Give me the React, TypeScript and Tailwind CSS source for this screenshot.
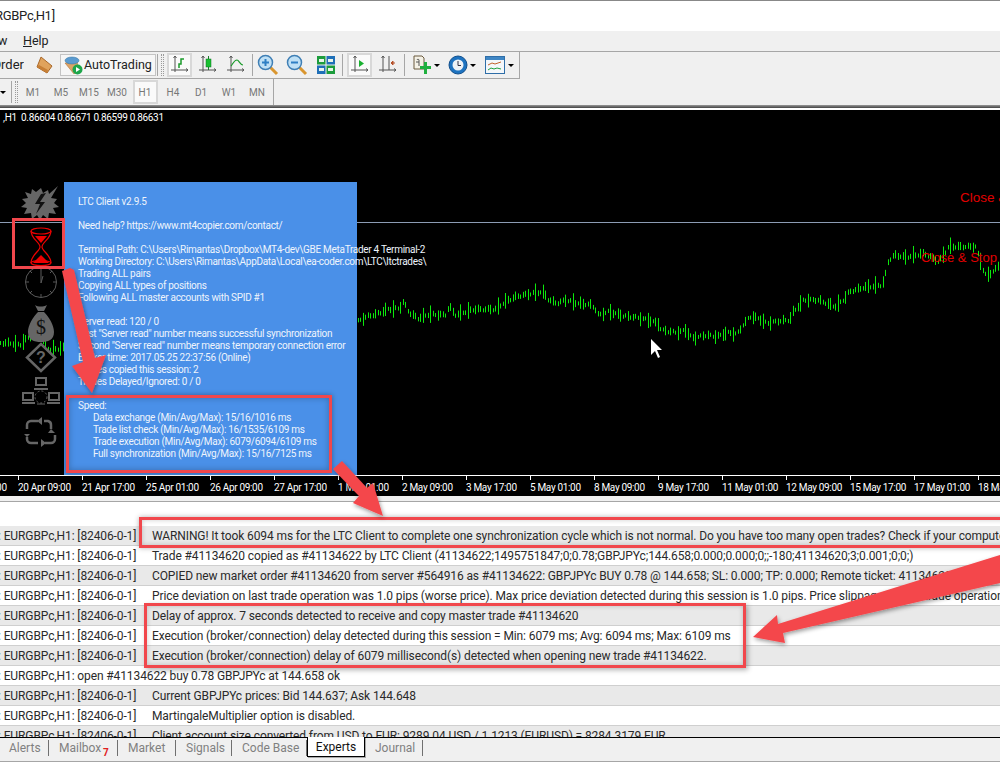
const traceRaw: [number, number][] = [
  [18, 425], [40, 410], [70, 400], [90, 388], [120, 385], [128, 365], [145, 400], [165, 415], [190, 403], [230, 405],
  [240, 380], [255, 405], [280, 395], [300, 388], [350, 388], [375, 365], [400, 350], [440, 340], [465, 335], [480, 360],
  [500, 370], [520, 360], [550, 370], [585, 375], [600, 405], [625, 395], [660, 408], [690, 412], [720, 420], [745, 432],
  [750, 450], [790, 458], [810, 450], [825, 475], [860, 465], [885, 470], [910, 458], [935, 462], [945, 440], [965, 410],
  [985, 415], [1005, 430], [1040, 422], [1060, 420], [1070, 395], [1095, 360], [1130, 360], [1170, 380], [1190, 360], [1205, 335],
  [1240, 322], [1285, 315], [1300, 240], [1315, 225], [1340, 232], [1385, 220], [1420, 245], [1445, 200], [1510, 200], [1525, 260],
  [1535, 290], [1555, 270], [1568, 255],
]

// chart line in page coords, y relative to chart top (110)
const trace: [number, number][] = [
  [0, 233], [10, 233], [20, 235], [25, 230], [33, 225], [40, 227], [50, 240], [63, 238],
  ...traceRaw.map(([x, y]): [number, number] => [350 + x / 2.412, 70 + y / 3]),
]

function priceAt(x: number) {
  for (let i = 1; i < trace.length; i++) {
    if (x <= trace[i][0]) {
      const [x0, y0] = trace[i - 1]
      const [x1, y1] = trace[i]
      return y0 + ((y1 - y0) * (x - x0)) / (x1 - x0 || 1)
    }
  }
  return trace[trace.length - 1][1]
}

const bars = Array.from({ length: 400 }, (_, i) => {
  const x = Math.round(i * 2.5) + 0.5
  const y = priceAt(x) + Math.sin(i * 1.7) * 1
  const wave = Math.abs(Math.sin(i * 0.83) * Math.cos(i * 2.1))
  const h = 2 + wave * wave * 7
  return { x, y1: y - h, y2: y + h }
})

const logRows = [
  'WARNING! It took 6094 ms for the LTC Client to complete one synchronization cycle which is not normal. Do you have too many open trades? Check if your computer',
  'Trade #41134620 copied as #41134622 by LTC Client (41134622;1495751847;0;0.78;GBPJPYc;144.658;0.000;0.000;0;;-180;41134620;3;0.001;0;0;)',
  'COPIED new market order #41134620 from server #564916 as #41134622: GBPJPYc BUY 0.78 @ 144.658; SL: 0.000; TP: 0.000; Remote ticket: 41134620;',
  'Price deviation on last trade operation was 1.0 pips (worse price). Max price deviation detected during this session is 1.0 pips. Price slippage on last trade operation',
  'Delay of approx. 7 seconds detected to receive and copy master trade #41134620',
  'Execution (broker/connection) delay detected during this session = Min: 6079 ms; Avg: 6094 ms; Max: 6109 ms',
  'Execution (broker/connection) delay of 6079 millisecond(s) detected when opening new trade #41134622.',
  null,
  'Current GBPJPYc prices: Bid 144.637; Ask 144.648',
  'MartingaleMultiplier option is disabled.',
  'Client account size converted from USD to EUR: 9289.04 USD / 1.1213 (EURUSD) = 8284.3179 EUR',
]

const axisLabels = [
  '17 Apr 17:00', '20 Apr 09:00', '21 Apr 17:00', '25 Apr 01:00', '26 Apr 09:00', '27 Apr 17:00', '1 May 01:00', '2 May 09:00', '3 May 17:00',
  '5 May 01:00', '8 May 09:00', '9 May 17:00', '11 May 01:00', '12 May 09:00', '15 May 17:00', '17 May 01:00', '18 May 09:00',
]

const timeframes = ['M1', 'M5', 'M15', 'M30', 'H1', 'H4', 'D1', 'W1', 'MN']

function Axes({ children }: { children?: React.ReactNode }) {
  return (
    <svg width="20" height="20" viewBox="0 0 20 20" fill="none">
      <path d="M5 1v16M1 15h17M3.500 3 5 1l1.500 2M16 13.500l2 1.500-2 1.500" stroke="#555" strokeWidth="1" />
      {children}
    </svg>
  )
}

function Lens({ minus }: { minus?: boolean }) {
  return (
    <svg width="22" height="22" viewBox="0 0 22 22" fill="none">
      <path d="M13 13l7 7" stroke="#d9962f" strokeWidth="3" />
      <circle cx="8.500" cy="8.500" r="7" fill="#bfe0f5" stroke="#3f7fb5" strokeWidth="1.500" />
      <path d={minus ? 'M5 8.500h7' : 'M5 8.500h7M8.500 5v7'} stroke="#2e7fc4" strokeWidth="2" />
    </svg>
  )
}

function Caret() {
  return <div className="w-0 h-0 border-x-[3px] border-x-transparent border-t-[3px] border-t-black" />
}

function Sep() {
  return <div className="w-px h-[22px] bg-[#a6a6a6]" />
}

function Grip() {
  return <div className="w-[3px] h-[22px] border-x border-dotted border-[#9a9a9a]" />
}

function Btn({ className, active, children }: { className: string; active?: boolean; children: React.ReactNode }) {
  return (
    <div className={`${className} h-[24px] flex items-center justify-center ${active ? 'bg-[#fafafa] border-2 border-[#d8d8d8]' : ''}`}>
      {children}
    </div>
  )
}

function Toolbar() {
  return (
    <div className="w-[520px] h-[27px] flex items-center border-b border-r border-[#a6a6a6] text-[#222]">
      <div className="w-[24px] overflow-hidden flex justify-end text-[13px] whitespace-nowrap">Order</div>
      <div className="ml-[12px] w-[17px] flex">
        <svg width="17" height="18" viewBox="0 0 17 18">
          <path d="M5 1l11 9-5 7-10-6z" fill="#e0a35c" stroke="#a8672a" />
          <path d="M1 11l10 6 1-3-9-5z" fill="#c77f35" />
        </svg>
      </div>
      <div className="ml-[7px] w-[96px] h-[22px] flex items-center border border-[#c4c4c4] bg-[#f6f6f6]">
        <svg className="ml-[2px] shrink-0" width="20" height="20" viewBox="0 0 20 20">
          <path d="M2 8l12-1 2 7-5 5z" fill="#dca468" stroke="#a8672a" strokeWidth="0.500" />
          <ellipse cx="9" cy="5.500" rx="7" ry="3.500" fill="#5b9bd0" stroke="#33729f" strokeWidth="0.500" />
          <circle cx="14.500" cy="14.500" r="5" fill="#1ea64b" />
          <path d="M13 12v5l4-2.500z" fill="#fff" />
        </svg>
        <span className="ml-[1px] text-[12.500px] whitespace-nowrap">AutoTrading</span>
      </div>
      <div className="ml-px"><Sep /></div>
      <div className="ml-[3px]"><Grip /></div>
      <Btn className="ml-[3px] w-[25px]" active>
        <Axes><path d="M9 13V9h2V4h3" stroke="#1a9a2a" strokeWidth="1.500" /></Axes>
      </Btn>
      <Btn className="w-[32px]">
        <Axes>
          <path d="M10.500 1v14" stroke="#1a7a2a" />
          <rect x="8" y="4" width="5" height="8" fill="#18c02f" stroke="#12702a" strokeWidth="0.500" />
        </Axes>
      </Btn>
      <Btn className="w-[24px]">
        <Axes><path d="M5 11c2-2 3-6 6-6 2 0 3 5 6 5" stroke="#1a9a2a" strokeWidth="1.200" /></Axes>
      </Btn>
      <div className="ml-[4px]"><Sep /></div>
      <Btn className="w-[30px]"><Lens /></Btn>
      <Btn className="w-[28px]"><Lens minus /></Btn>
      <Btn className="w-[30px]">
        <svg width="18" height="18" viewBox="0 0 18 18">
          <rect x="0" y="0" width="8.500" height="8.500" fill="#1c9c3c" />
          <rect x="9.500" y="0" width="8.500" height="8.500" fill="#1f6fb8" />
          <rect x="0" y="9.500" width="8.500" height="8.500" fill="#1f6fb8" />
          <rect x="9.500" y="9.500" width="8.500" height="8.500" fill="#1c9c3c" />
          <path d="M2 3h5v3H2zM11 3h5v3h-5zM2 12h5v3H2zM11 12h5v3h-5z" fill="#e8f4ea" />
        </svg>
      </Btn>
      <div className="ml-px"><Sep /></div>
      <Btn className="ml-[4px] w-[25px]" active>
        <Axes><path d="M9 5v7l5-3.500z" fill="#18b02f" /></Axes>
      </Btn>
      <Btn className="w-[32px]">
        <Axes>
          <path d="M11 1v14" stroke="#555" />
          <path d="M17 8h-4M13 8l2-2v4z" fill="#b5502a" stroke="#b5502a" />
        </Axes>
      </Btn>
      <Sep />
      <Btn className="ml-[2px] w-[30px]">
        <svg width="20" height="20" viewBox="0 0 20 20">
          <path d="M2 1h8l2 2v11H2z" fill="#f4f1e6" stroke="#6b5a3e" />
          <path d="M5 5c0-1 2-1 2 0v6M4 7h3" stroke="#555" fill="none" />
          <path d="M12 7h3v4h4v3h-4v5h-3v-5H8v-3h4z" fill="#1fb03f" />
        </svg>
      </Btn>
      <div className="w-[6px] -ml-[3px] flex justify-center"><Caret /></div>
      <Btn className="ml-[6px] w-[24px]">
        <svg width="20" height="20" viewBox="0 0 20 20">
          <circle cx="10" cy="10" r="9" fill="#1e73c0" stroke="#124f8c" />
          <circle cx="10" cy="10" r="5.500" fill="#eef3f7" />
          <path d="M10 6v4.500h3" stroke="#334" fill="none" />
        </svg>
      </Btn>
      <div className="w-[6px] flex justify-center"><Caret /></div>
      <Btn className="ml-[6px] w-[26px]">
        <svg width="20" height="18" viewBox="0 0 20 18">
          <rect x="0.500" y="0.500" width="19" height="17" fill="#f4f7fa" stroke="#2f6ea8" />
          <rect x="1" y="1" width="18" height="3" fill="#3f86c4" />
          <path d="M3 9l4-2 3 1 6-2" stroke="#c2622a" fill="none" />
          <path d="M3 14l3-2 3 1 3-1 4 1" stroke="#1fa03f" fill="none" />
        </svg>
      </Btn>
      <div className="w-[6px] flex justify-center"><Caret /></div>
    </div>
  )
}

function Timeframes() {
  return (
    <div className="w-[274px] h-[26px] flex items-center border-r border-[#a6a6a6]">
      <div className="w-[6px] flex justify-center"><Caret /></div>
      <div className="ml-[5px]"><Sep /></div>
      <div className="ml-[3px]"><Grip /></div>
      <div className="ml-px flex text-[10px] text-[#777]">
        {timeframes.map(tf => (
          <div key={tf} className="w-[28px] flex justify-center">
            <span className={`h-[24px] flex items-center justify-center ${tf === 'H1' ? 'w-[25px] bg-[#fafafa] border-2 border-[#d8d8d8]' : ''}`}>{tf}</span>
          </div>
        ))}
      </div>
    </div>
  )
}

function ChartIcons() {
  return (
    <div className="absolute left-[20px] top-[75px] w-[42px] flex flex-col items-center">
      <svg width="42" height="36" viewBox="0 0 42 36">
        <path d="M21 3l2 5 5-3 1 4 9-8-7 12 6 1-3 4 5 4-6 1 3 6-7-1-1 6-5-4-3 5-3-5-5 4-1-6-7 1 3-6-6-1 5-4-4-4 6-1-3-6 6 2 1-5 4 3z" fill="#666" />
        <path d="M26 8l-6 9h5l-9 12 4-10h-5l6-10z" fill="#111" />
      </svg>
      <svg className="mt-[6px]" width="26" height="40" viewBox="0 0 26 40" fill="none" stroke="#f00000" strokeWidth="1.200">
        <ellipse cx="13" cy="4" rx="10" ry="3" />
        <path d="M3 4c0 8 9 11 9 16 0 4-9 8-9 16M23 4c0 8-9 11-9 16 0 4 9 8 9 16" />
        <ellipse cx="13" cy="36" rx="10" ry="2.500" />
        <path d="M7 9h12l-6 7zM5 36l8-8 8 8z" fill="#f00000" stroke="none" />
      </svg>
      <svg className="mt-[-2px]" width="34" height="34" viewBox="0 0 34 34" fill="none" stroke="#5a5a5a">
        <circle cx="17" cy="17" r="15.500" />
        <path d="M17 5v13l2-7M17 2v3M17 29v3M2 17h3M29 17h3M6 6l2 2M28 6l-2 2M6 28l2-2M28 28l-2-2" />
      </svg>
      <svg className="mt-[5px]" width="26" height="38" viewBox="0 0 26 38">
        <path d="M7 1c3 2 8 2 12 0l-3 6h-6zM10 8h6c5 5 10 13 10 20 0 8-6 10-13 10S0 36 0 28C0 21 5 13 10 8z" fill="#666" />
        <text x="13" y="30" textAnchor="middle" fontSize="20" fontFamily="Liberation Serif, serif" fill="#111">$</text>
      </svg>
      <svg className="mt-[0px]" width="32" height="31" viewBox="0 0 32 31" fill="none">
        <path d="M16 2l14 13.500L16 29 2 15.500z" stroke="#666" strokeWidth="2.500" />
        <text x="16" y="21" textAnchor="middle" fontSize="16" fontWeight="bold" fontFamily="Liberation Sans, sans-serif" fill="#666">?</text>
      </svg>
      <svg className="mt-[4px]" width="38" height="33" viewBox="0 0 38 33">
        <path d="M13 0h12v9H13zM15 2v5h8V2zM0 15h12v9H0zM2 17v5h8v-5zM26 15h12v9H26zM28 17v5h8v-5z" fill="#666" fillRule="evenodd" />
        <path d="M12 11h14v2H12zM-1 25h14v2H-1zM25 25h14v2H25z" fill="#666" />
        <circle cx="19" cy="20" r="6" fill="none" stroke="#666" strokeDasharray="2 2" />
        <path d="M15 27h8" stroke="#666" />
      </svg>
      <svg className="mt-[6px]" width="34" height="32" viewBox="0 0 34 32" fill="none" stroke="#666" strokeWidth="2.500">
        <path d="M14 5H7a4 4 0 0 0-4 4v4M27 13V9a4 4 0 0 0-3-4h-4M31 19v4a4 4 0 0 1-4 4h-6M14 27H7a4 4 0 0 1-4-4v-2" />
        <path d="M18 1l-5 4 5 4zM3 21l-3-3h6zM27 13l-3 4h7zM17 23l5 4-5 4z" fill="#666" stroke="none" />
      </svg>
    </div>
  )
}

function InfoPanel() {
  return (
    <div className="absolute left-[64px] top-[72px] w-[293px] h-[293px] bg-[#4a90e8] pt-[14px] pl-[14px] text-[10px] tracking-[-0.3px] leading-[12px] text-[#eef4fc] whitespace-pre">
      <div>LTC Client v2.9.5</div>
      <div className="mt-[12px]">Need help? https://www.mt4copier.com/contact/</div>
      <div className="mt-[12px]">Terminal Path: C:\Users\Rimantas\Dropbox\MT4-dev\GBE MetaTrader 4 Terminal-2</div>
      <div>Working Directory: C:\Users\Rimantas\AppData\Local\ea-coder.com\LTC\ltctrades\</div>
      <div>Trading ALL pairs</div>
      <div>Copying ALL types of positions</div>
      <div>Following ALL master accounts with SPID #1</div>
      <div className="mt-[12px]">Server read: 120 / 0</div>
      <div>First "Server read" number means successful synchronization</div>
      <div>Second "Server read" number means temporary connection error</div>
      <div>Broker time: 2017.05.25 22:37:56 (Online)</div>
      <div>Trades copied this session: 2</div>
      <div>Trades Delayed/Ignored: 0 / 0</div>
      <div className="mt-[12px]">Speed:</div>
      <div className="pl-[15px]">
        <div>Data exchange (Min/Avg/Max): 15/16/1016 ms</div>
        <div>Trade list check (Min/Avg/Max): 16/1535/6109 ms</div>
        <div>Trade execution (Min/Avg/Max): 6079/6094/6109 ms</div>
        <div>Full synchronization (Min/Avg/Max): 15/16/7125 ms</div>
      </div>
    </div>
  )
}

function Chart() {
  return (
    <div className="h-[386px] flex flex-col bg-black text-white">
      <div className="relative flex-1 overflow-hidden">
        <svg className="absolute inset-0" width="1000" height="365" viewBox="0 0 1000 365">
          <path d="M0 112.500h1000" stroke="#8c9cb4" />
          {bars.map(b => (
            <line key={b.x} x1={b.x} x2={b.x} y1={b.y1} y2={b.y2} stroke="#0ce80c" />
          ))}
          <path d="M651 229v16l4-4 3 7 2-1-3-7 5 0z" fill="#fff" />
        </svg>
        <div className="absolute left-[3px] top-[1px] text-[10px] tracking-[-0.33px] leading-[14px] whitespace-pre">,H1  0.86604 0.86671 0.86599 0.86631</div>
        <ChartIcons />
        <div className="absolute left-[960px] top-[80px] text-[13.500px] leading-[16px] text-[#e00000] whitespace-nowrap font-['Liberation_Sans',sans-serif]">Close &amp; Stop</div>
        <div className="absolute left-[921px] top-[140px] text-[13px] leading-[16px] text-[#e00000] whitespace-nowrap font-['Liberation_Sans',sans-serif]">Close &amp; Stop</div>
        <InfoPanel />
      </div>
      <div className="h-[21px] border-t border-white flex -ml-[46px] shrink-0">
        {axisLabels.map(l => (
          <div key={l} className="w-[64px] shrink-0">
            <div className="w-px h-[4px] bg-white" />
            <div className="text-[10px] tracking-[-0.33px] leading-[14px] whitespace-nowrap mt-[1px]">{l}</div>
          </div>
        ))}
      </div>
    </div>
  )
}

function LogRow({ message, odd }: { message: string | null; odd: boolean }) {
  return (
    <div className={`h-[20px] shrink-0 flex items-center border-b border-[#cfcfcf] text-[12px] tracking-[-0.11px] text-[#2a2a2a] whitespace-nowrap ${odd ? 'bg-white' : 'bg-[#e9e9e9]'}`}>
      {message === null ? (
        <span className="-ml-[2px]">: EURGBPc,H1: open #41134622 buy 0.78 GBPJPYc at 144.658 ok</span>
      ) : (
        <>
          <span className="-ml-[2px] w-[154px] shrink-0">: EURGBPc,H1: [82406-0-1]</span>
          <span>{message}</span>
        </>
      )}
    </div>
  )
}

function Tabs() {
  const items = [
    { label: 'Alerts', w: 'w-[49px]' },
    { label: 'Mailbox', w: 'w-[69px]', badge: '7' },
    { label: 'Market', w: 'w-[58px]' },
    { label: 'Signals', w: 'w-[56px]' },
    { label: 'Code Base', w: 'w-[75px]' },
  ]
  return (
    <div className="h-[24px] shrink-0 flex items-start bg-[#f0f0f0] border-t border-black text-[12px] text-[#808080]">
      {items.map((t, i) => (
        <div key={t.label} className={`${t.w} h-[16px] mt-[2px] flex items-center ${i === 0 ? 'pl-[9px]' : 'pl-[10px]'} border-r border-[#707070] whitespace-nowrap relative`}>
          {t.label}
          {t.badge && <span className="absolute left-[54px] top-[5px] text-[10px] font-bold text-[#e02020]">{t.badge}</span>}
        </div>
      ))}
      <div className="w-[58px] h-[20px] -mt-px bg-white border-x border-b border-black text-[#111] flex items-center justify-center shadow-[1px_1px_0_#aaa]">Experts</div>
      <div className="ml-[10px] w-[48px] h-[16px] mt-[2px] flex items-center border-r border-[#707070]">Journal</div>
    </div>
  )
}

function Annotations() {
  return (
    <>
      <div className="absolute left-[12px] top-[218px] w-[53px] h-[51px] border-[3px] border-[#f1474c]" />
      <div className="absolute left-[66px] top-[395px] w-[266px] h-[78px] border-[3px] border-[#f1474c] shadow-[0_0_5px_rgba(0,0,0,0.35),inset_0_0_6px_rgba(0,0,0,0.25)]" />
      <div className="absolute left-[139px] top-[517px] w-[880px] h-[31px] border-[3px] border-[#f1474c] shadow-[0_0_5px_rgba(0,0,0,0.3),inset_0_0_5px_rgba(0,0,0,0.2)]" />
      <div className="absolute left-[144px] top-[603px] w-[602px] h-[65px] border-[3px] border-[#f1474c] shadow-[2px_2px_5px_rgba(0,0,0,0.3),inset_0_0_5px_rgba(0,0,0,0.2)]" />
      <svg className="absolute inset-0 pointer-events-none" width="1000" height="764" viewBox="0 0 1000 764">
        <defs>
          <filter id="arrowShadow" x="-20%" y="-20%" width="140%" height="140%">
            <feDropShadow dx="1" dy="2" stdDeviation="2" floodColor="#000" floodOpacity="0.4" />
          </filter>
        </defs>
        <g fill="#f4474b" filter="url(#arrowShadow)">
          <path d="M62 271L70 268L74 270L95 358L106 355L92 393L72 366L83 362Z" />
          <path d="M333 469L342 461L367 488L373 483L383 516L353 503L359 496Z" />
          <path d="M1000 555V583L783 633L785 643L753 637L777 615L778 624Z" />
        </g>
      </svg>
    </>
  )
}

export default function App() {
  return (
    <div className="relative w-[1000px] h-[764px] overflow-hidden bg-white font-['Roboto',sans-serif]">
      <div className="h-px bg-[#888]" />
      <div className="h-[30px] flex items-center overflow-hidden text-[13px] tracking-[-0.3px] text-[#222] bg-white">
        <span className="-ml-[5px] whitespace-nowrap">RGBPc,H1]</span>
      </div>
      <div className="h-[20px] bg-[#f0f0f0] flex items-center text-[12.500px] text-[#222]">
        <span className="-ml-[2px] w-[25px]">w</span>
        <span><span className="underline">H</span>elp</span>
      </div>
      <div className="h-px bg-[#a6a6a6]" />
      <div className="bg-[#f0f0f0]">
        <Toolbar />
        <Timeframes />
      </div>
      <div className="h-[3px] bg-gradient-to-b from-[#999] to-[#444]" />
      <div className="h-[2px] bg-white" />
      <Chart />
      <div className="h-[5px] bg-[#f0f0f0]" />
      <div className="h-px bg-[#a6a6a6]" />
      <div className="h-[24px] bg-white" />
      <div className="h-[211px] overflow-hidden">
        {logRows.map((m, i) => (
          <LogRow key={i} message={m} odd={i % 2 === 1} />
        ))}
      </div>
      <Tabs />
      <div className="h-px bg-[#a6a6a6]" />
      <Annotations />
    </div>
  )
}
